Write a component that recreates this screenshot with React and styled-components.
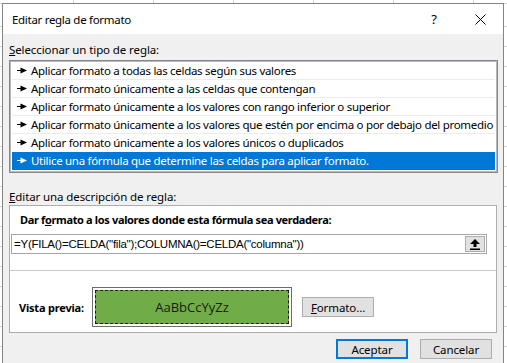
import React from "react";
import styled, { createGlobalStyle } from "styled-components";

const GlobalStyle = createGlobalStyle`
  html, body {
    margin: 0;
    padding: 0;
    height: 100%;
    overflow: hidden;
  }
  body {
    background-color: #ffffff;
    background-image:
      repeating-linear-gradient(to right, transparent 0 79px, #d4d4d4 79px 80px),
      repeating-linear-gradient(to bottom, transparent 0 19px, #d4d4d4 19px 20px);
    background-position: -6px 0, 0 7px;
    font-family: "Noto Sans", "Segoe UI", sans-serif;
    font-size: 11.5px;
    color: #000;
  }
`;

const Screen = styled.div`
  height: 100vh;
  box-sizing: border-box;
  display: flex;
  padding: 3px 3px 0 2px;
`;

const Dialog = styled.div`
  flex: 1;
  display: flex;
  flex-direction: column;
  background: #f0f0f0;
  border: 1px solid #858585;
  border-bottom: none;
`;

const TitleBar = styled.div`
  display: flex;
  align-items: center;
  height: 30px;
  background: #fff;
  padding-left: 9px;
  letter-spacing: -0.3px;
`;

const Title = styled.div`
  flex: 1;
`;

const TitleButton = styled.div`
  width: 46px;
  height: 30px;
  display: flex;
  align-items: center;
  justify-content: center;
  font-size: 13px;
`;

const Body = styled.div`
  display: flex;
  flex-direction: column;
  padding: 0 5px 0 6px;
`;

const SectionLabel = styled.div`
  line-height: 16px;
  margin-top: ${(p) => p.$top}px;
  letter-spacing: -0.1px;
`;

const ListBox = styled.div`
  margin-top: 2px;
  background: #fff;
  border: 1px solid #828790;
  box-shadow: inset 0 0 0 1px #b9b9b9;
  padding: 1px 2px 2px 2px;
`;

const Row = styled.div`
  display: flex;
  align-items: center;
  height: 18px;
  box-sizing: border-box;
  border-bottom: 1px solid ${(p) => (p.$last ? "transparent" : "#ececec")};
  background: ${(p) => (p.$selected ? "#0078d7" : "transparent")};
  color: ${(p) => (p.$selected ? "#fff" : "#000")};
  padding-left: 5px;
  white-space: nowrap;
  letter-spacing: -0.3px;
  svg {
    flex: none;
    margin-right: 3px;
  }
`;

const Panel = styled.div`
  margin: 0 1px 0 0;
  background: #fff;
  border: 1px solid #adadad;
  display: flex;
  flex-direction: column;
  padding-bottom: 5px;
`;

const BoldLabel = styled.div`
  font-weight: bold;
  font-size: 11px;
  line-height: 16px;
  margin: 6px 0 0 10px;
  letter-spacing: -0.35px;
`;

const FormulaInput = styled.div`
  display: flex;
  align-items: center;
  margin: 6px 9px 0 1px;
  height: 20px;
  box-sizing: border-box;
  border: 1px solid #a8a8a8;
  background: #fff;
  padding-left: 2px;
  font-family: "Liberation Sans", "Noto Sans", sans-serif;
  font-size: 11.5px;
  letter-spacing: -0.25px;
`;

const FormulaText = styled.span`
  flex: 1;
`;

const CollapseButton = styled.div`
  width: 20px;
  height: 16px;
  margin-right: 1px;
  box-sizing: border-box;
  border: 1px solid #adadad;
  background: #e1e1e1;
  display: flex;
  align-items: center;
  justify-content: center;
`;

const Divider = styled.div`
  height: 1px;
  background: #c8c8c8;
  margin-top: 16px;
`;

const PreviewRow = styled.div`
  display: flex;
  align-items: center;
  margin-top: 16px;
  padding-left: 9px;
`;

const PreviewLabel = styled.div`
  font-weight: bold;
  font-size: 11px;
  width: 73px;
  letter-spacing: -0.2px;
`;

const PreviewFrame = styled.div`
  width: 200px;
  height: 40px;
  box-sizing: border-box;
  border: 1px solid #6d6d6d;
  padding: 2px;
  background: #fff;
`;

const PreviewSample = styled.div`
  height: 100%;
  box-sizing: border-box;
  background: #70ad47;
  border: 1px dashed #1b1b1b;
  display: flex;
  align-items: center;
  justify-content: center;
  font-family: "Open Sans", "Noto Sans", sans-serif;
  font-size: 13px;
  color: #1a1a1a;
`;

const Button = styled.div`
  width: 72px;
  height: 20px;
  box-sizing: border-box;
  display: flex;
  align-items: center;
  justify-content: center;
  background: #e1e1e1;
  border: ${(p) => (p.$default ? "2px solid #0078d7" : "1px solid #adadad")};
  letter-spacing: -0.1px;
`;

const FormatButton = styled(Button)`
  margin-left: 10px;
`;

const ButtonBar = styled.div`
  display: flex;
  justify-content: flex-end;
  gap: 12px;
  margin-top: 6px;
  padding-right: 6px;
`;

const Arrow = ({ color }) => (
  <svg width="11" height="7" viewBox="0 0 11 7">
    <rect x="0" y="3" width="5" height="1" fill={color} />
    <polygon points="3.5,0.5 10,3.5 3.5,6.5" fill={color} />
  </svg>
);

const CloseIcon = () => (
  <svg width="11" height="11" viewBox="0 0 11 11">
    <path d="M0.5 0.5 L10.5 10.5 M10.5 0.5 L0.5 10.5" stroke="#000" strokeWidth="1" />
  </svg>
);

const UpIcon = () => (
  <svg width="10" height="11" viewBox="0 0 10 11">
    <polygon points="5,0 10,5 6.5,5 6.5,8 3.5,8 3.5,5 0,5" fill="#000" />
    <rect x="0" y="9.5" width="10" height="1.5" fill="#000" />
  </svg>
);

const rules = [
  "Aplicar formato a todas las celdas según sus valores",
  "Aplicar formato únicamente a las celdas que contengan",
  "Aplicar formato únicamente a los valores con rango inferior o superior",
  "Aplicar formato únicamente a los valores que estén por encima o por debajo del promedio",
  "Aplicar formato únicamente a los valores únicos o duplicados",
  "Utilice una fórmula que determine las celdas para aplicar formato.",
];

export default function App() {
  return (
    <>
      <GlobalStyle />
      <Screen>
        <Dialog>
          <TitleBar>
            <Title>Editar regla de formato</Title>
            <TitleButton>?</TitleButton>
            <TitleButton>
              <CloseIcon />
            </TitleButton>
          </TitleBar>
          <Body>
            <SectionLabel $top={8}>
              <u>S</u>eleccionar un tipo de regla:
            </SectionLabel>
            <ListBox>
              {rules.map((r, i) => {
                const selected = i === rules.length - 1;
                return (
                  <Row key={r} $selected={selected} $last={i >= rules.length - 2}>
                    <Arrow color={selected ? "#fff" : "#000"} />
                    {r}
                  </Row>
                );
              })}
            </ListBox>
            <SectionLabel $top={16}>
              <u>E</u>ditar una descripción de regla:
            </SectionLabel>
            <Panel>
              <BoldLabel>
                Dar f<u>o</u>rmato a los valores donde esta fórmula sea verdadera:
              </BoldLabel>
              <FormulaInput>
                <FormulaText>=Y(FILA()=CELDA("fila");COLUMNA()=CELDA("columna"))</FormulaText>
                <CollapseButton>
                  <UpIcon />
                </CollapseButton>
              </FormulaInput>
              <Divider />
              <PreviewRow>
                <PreviewLabel>Vista previa:</PreviewLabel>
                <PreviewFrame>
                  <PreviewSample>AaBbCcYyZz</PreviewSample>
                </PreviewFrame>
                <FormatButton>
                  <span>
                    <u>F</u>ormato...
                  </span>
                </FormatButton>
              </PreviewRow>
            </Panel>
            <ButtonBar>
              <Button $default>Aceptar</Button>
              <Button>Cancelar</Button>
            </ButtonBar>
          </Body>
        </Dialog>
      </Screen>
    </>
  );
}
